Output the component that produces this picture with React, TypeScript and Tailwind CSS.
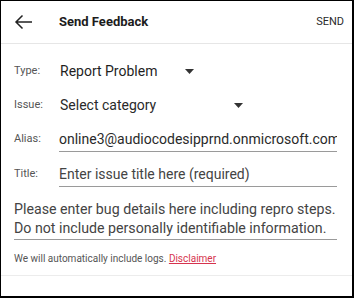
import React from "react";

const Caret = () => (
  <svg width="9" height="5" viewBox="0 0 9 5" className="block">
    <path d="M0 0 H9 L4.5 5 Z" fill="#333" />
  </svg>
);

export default function App() {
  return (
    <div
      className="w-[354px] h-[298px] bg-white border-t border-l border-r-2 border-b-2 border-black flex flex-col overflow-hidden"
      style={{ fontFamily: "Roboto, 'Noto Sans', sans-serif" }}
    >
      <div className="h-[43px] shrink-0 flex items-center border-b border-[#e6e6e6] pl-[13px] pr-[8px]">
        <svg width="19" height="16" viewBox="0 0 19 16" className="block">
          <path d="M18 8 H2 M8.5 1.5 L2 8 L8.5 14.5" stroke="#222" strokeWidth="1.5" fill="none" />
        </svg>
        <div className="ml-[26px] text-[13px] font-bold text-[#1c1c1c]">Send Feedback</div>
        <div className="ml-auto text-[11px] text-[#2a2a2a]">SEND</div>
      </div>

      <div className="flex flex-col pl-[13px] pr-[15px]">
        <div className="h-[34px] mt-[10px] flex items-center">
          <div className="w-[46px] text-[11px] text-[#555]">Type:</div>
          <div className="w-[125px] text-[14px] text-[#1f1f1f]">Report Problem</div>
          <Caret />
        </div>
        <div className="h-[34px] flex items-center">
          <div className="w-[46px] text-[11px] text-[#555]">Issue:</div>
          <div className="w-[174px] text-[14px] text-[#2a2a2a]">Select category</div>
          <Caret />
        </div>
        <div className="h-[34px] flex items-center">
          <div className="w-[45px] text-[11px] text-[#555]">Alias:</div>
          <div className="flex-1 border-b-[1.5px] border-[#9a9a9a] pt-[3px] pb-[1px] text-[14px] text-[#2a2a2a] whitespace-nowrap overflow-hidden">
            online3@audiocodesipprnd.onmicrosoft.com
          </div>
        </div>
        <div className="h-[36px] flex items-center">
          <div className="w-[45px] text-[11px] text-[#555]">Title:</div>
          <div className="flex-1 border-b-[1.5px] border-[#9a9a9a] pt-[3px] pb-[1px] text-[14px] text-[#444]">
            Enter issue title here (required)
          </div>
        </div>
        <div className="mt-[8px] border-b-[1.5px] border-[#9a9a9a] pb-[1px] text-[14.2px] leading-[19px] text-[#444]">
          <div className="whitespace-nowrap">Please enter bug details here including repro steps.</div>
          <div className="whitespace-nowrap">Do not include personally identifiable information.</div>
        </div>
        <div className="mt-[11px] text-[10px] text-[#555]">
          We will automatically include logs.{" "}
          <span className="text-[#d6334e] underline">Disclaimer</span>
        </div>
      </div>
      <div className="mt-[9px] border-b border-[#ececec]" />
    </div>
  );
}
